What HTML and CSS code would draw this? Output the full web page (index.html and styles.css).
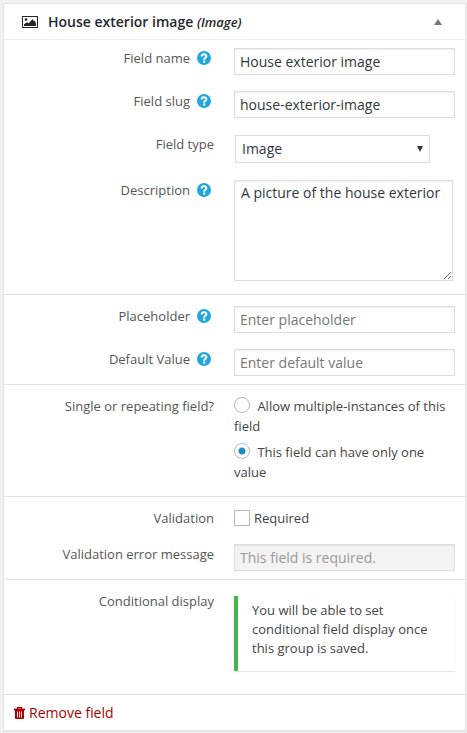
FILE: index.html
```html
<!DOCTYPE html>
<html lang="en">
<head>
    <meta charset="UTF-8">
    <meta name="viewport" content="width=device-width, initial-scale=1">
    <title>House exterior image</title>
    <link rel="stylesheet" href="styles.css">
</head>
<body>
    <!-- Shared help icon -->
    <svg class="sprite" width="0" height="0" aria-hidden="true">
        <symbol id="help" viewBox="0 0 14 14">
            <circle cx="7" cy="7" r="7" fill="#21a6dc"/>
            <path d="M4.700 5.500C4.700 2.600 9.400 2.600 9.400 5.200C9.400 6.900 7.100 6.700 7.100 8.700" fill="none" stroke="#fff" stroke-width="2"/>
            <rect x="6.1" y="9.5" width="2.1" height="2.1" fill="#fff"/>
        </symbol>
    </svg>

    <form class="field-box">
        <header class="field-header">
            <svg class="type-icon" width="16" height="12" viewBox="0 0 16 12" aria-hidden="true">
                <rect x=".5" y=".5" width="15" height="11" fill="#fff" stroke="#23282d"/>
                <circle cx="4" cy="3.6" r="1.3" fill="#23282d"/>
                <path d="M2 10V8.200l3-2 1.700 1L10.500 3l1.500 2.200.8-.4L14 7.500V10Z" fill="#23282d"/>
            </svg>
            <h2 class="field-title">House exterior image <em class="field-kind">(Image)</em></h2>
            <button class="toggle" type="button" aria-label="Collapse field">
                <svg width="8" height="6" viewBox="0 0 8 6"><path d="M4 0l4 6H0z" fill="#72777c"/></svg>
            </button>
        </header>

        <section class="section section-main">
            <div class="row">
                <div class="label-cell">
                    <label for="name">Field name</label>
                    <svg class="help"><use href="#help"/></svg>
                </div>
                <input class="control" id="name" type="text" value="House exterior image">
            </div>
            <div class="row">
                <div class="label-cell">
                    <label for="slug">Field slug</label>
                    <svg class="help"><use href="#help"/></svg>
                </div>
                <input class="control" id="slug" type="text" value="house-exterior-image">
            </div>
            <div class="row">
                <div class="label-cell"><label for="type">Field type</label></div>
                <div class="select-wrap">
                    <select class="control select" id="type">
                        <option>Image</option>
                    </select>
                </div>
            </div>
            <div class="row">
                <div class="label-cell">
                    <label for="description">Description</label>
                    <svg class="help"><use href="#help"/></svg>
                </div>
                <textarea class="control textarea" id="description">A picture of the house exterior</textarea>
            </div>
        </section>

        <section class="section section-defaults">
            <div class="row">
                <div class="label-cell">
                    <label for="placeholder">Placeholder</label>
                    <svg class="help"><use href="#help"/></svg>
                </div>
                <input class="control" id="placeholder" type="text" placeholder="Enter placeholder">
            </div>
            <div class="row">
                <div class="label-cell">
                    <label for="default">Default Value</label>
                    <svg class="help"><use href="#help"/></svg>
                </div>
                <input class="control" id="default" type="text" placeholder="Enter default value">
            </div>
        </section>

        <section class="section section-repeat">
            <div class="row" role="radiogroup" aria-labelledby="repeat-label">
                <div class="label-cell" id="repeat-label">Single or repeating field?</div>
                <div class="options">
                    <label class="option"><input class="radio" type="radio" name="repeat"> Allow multiple-instances of this field</label>
                    <label class="option"><input class="radio" type="radio" name="repeat" checked> This field can have only one value</label>
                </div>
            </div>
        </section>

        <section class="section section-validation">
            <div class="row">
                <div class="label-cell">Validation</div>
                <label class="check-option"><input class="checkbox" type="checkbox">Required</label>
            </div>
            <div class="row">
                <div class="label-cell"><label for="error">Validation error message</label></div>
                <input class="control" id="error" type="text" value="This field is required." disabled>
            </div>
        </section>

        <section class="section section-conditional">
            <div class="row">
                <div class="label-cell">Conditional display</div>
                <p class="notice">You will be able to set conditional field display once this group is saved.</p>
            </div>
        </section>

        <footer class="field-footer">
            <a class="remove" href="#">
                <svg width="11" height="12" viewBox="0 0 11 12" aria-hidden="true">
                    <path d="M3.500 2V.6h4V2" fill="none" stroke="#a00" stroke-width="1.200"/>
                    <path d="M0 1.600h11v1.800H0z" fill="#a00"/>
                    <path d="M1 3h9v8q0 1-1 1H2q-1 0-1-1z" fill="#a00"/>
                    <path d="M3.500 4.500v6M5.500 4.500v6M7.500 4.500v6" stroke="#fff" stroke-width=".9"/>
                </svg>
                Remove field
            </a>
        </footer>
    </form>
</body>
</html>
```
FILE: styles.css
```css
* {
    box-sizing: border-box;
}
body {
    margin: 0;
    padding: 3px 1px 2px 3px;
    background: #f1f1f1;
    color: #444;
    font-family: "Open Sans", sans-serif;
    font-size: 13px;
    line-height: 20px;
}
.sprite {
    position: absolute;
}
.field-box {
    background: #fff;
    border: 1px solid #e5e5e5;
    box-shadow: 0 1px 1px rgba(0, 0, 0, 0.04);
}

/* Header */
.field-header {
    display: flex;
    align-items: center;
    height: 36px;
    padding: 0 23px 0 18px;
    border-bottom: 1px solid #eee;
}
.type-icon {
    margin-right: 10px;
}
.field-title {
    flex: 1;
    margin: 0;
    color: #23282d;
    font-size: 14px;
    font-weight: 600;
}
.field-kind {
    font-size: 13px;
}
.toggle {
    display: flex;
    padding: 0;
    border: 0;
    background: none;
}

/* Sections and rows */
.section {
    display: grid;
    gap: 16px;
    padding: 8px 10px;
    border-bottom: 1px solid #e1e1e1;
}
.section-main {
    padding-bottom: 13px;
}
.section-defaults,
.section-repeat,
.section-validation,
.section-conditional {
    padding-top: 11px;
}
.section-conditional {
    padding-bottom: 23px;
}
.row {
    display: grid;
    grid-template-columns: 200fr 221fr;
    column-gap: 20px;
    align-items: start;
}
.label-cell {
    display: flex;
    justify-content: flex-end;
    align-items: center;
    color: #555;
}
.help {
    width: 14px;
    height: 14px;
    margin: 0 3px 0 7px;
}

/* Controls */
.control {
    display: block;
    width: 100%;
    height: 27px;
    margin: 0;
    padding: 0 5px;
    border: 1px solid #ddd;
    border-radius: 0;
    background: #fff;
    box-shadow: inset 0 1px 2px rgba(0, 0, 0, 0.07);
    color: #32373c;
    font: 14px/20px "Open Sans", sans-serif;
}
.control::placeholder {
    color: #777;
}
.control:disabled {
    border-color: #dedede;
    background: #f3f3f3;
    color: #999;
}
.select-wrap {
    display: grid;
    align-items: center;
    width: 195px;
    margin: 1px;
}
.select-wrap::after {
    content: "";
    grid-area: 1 / 1;
    justify-self: end;
    margin-right: 7px;
    border: solid transparent;
    border-width: 6px 3px 0;
    border-top-color: #32373c;
    pointer-events: none;
    z-index: 1;
}
.select {
    grid-area: 1 / 1;
    height: 28px;
    padding: 0 6px;
    appearance: none;
    box-shadow: none;
}
.textarea {
    width: 219px;
    height: 101px;
    padding: 2px 6px;
    resize: both;
}
.option {
    display: block;
}
.option + .option {
    margin-top: 6px;
}
.options {
    padding-bottom: 6px;
}
.radio,
.checkbox {
    width: 16px;
    height: 16px;
    margin: 0;
    border: 1px solid #b4b9be;
    background: #fff;
    appearance: none;
}
.radio {
    margin-right: 4px;
    border-radius: 50%;
    vertical-align: -2px;
}
.radio:checked {
    background: radial-gradient(circle, #1e8cbe 3px, #fff 4px);
}
.check-option {
    display: flex;
    align-items: center;
    gap: 4px;
}

/* Notice */
.notice {
    margin: 5px 0 0;
    padding: 5px 14px 13px;
    border-left: 4px solid #46b450;
    box-shadow: 0 1px 1px rgba(0, 0, 0, 0.1);
    line-height: 19px;
}

/* Footer */
.field-footer {
    padding: 8px 10px 7px;
}
.remove {
    display: flex;
    align-items: center;
    gap: 4px;
    color: #a00;
    font-size: 14px;
    text-decoration: none;
}
```
